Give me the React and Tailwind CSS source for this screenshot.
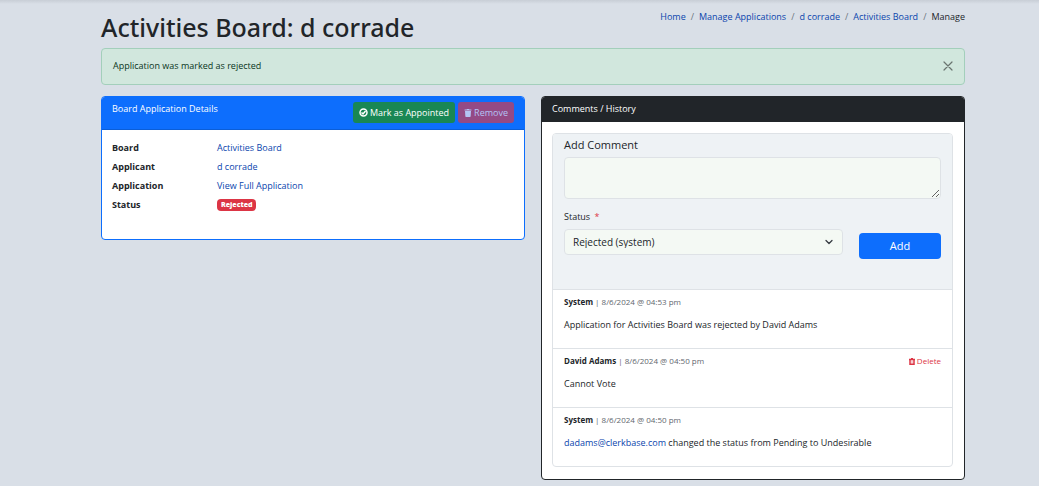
import { FaTrash } from "react-icons/fa";

const crumbs = ["Home", "Manage Applications", "d corrade", "Activities Board"];

function Row({ label, children }) {
  return (
    <div className="flex h-[19px] items-center">
      <dt className="w-[105px] shrink-0 font-bold">{label}</dt>
      <dd className="flex items-center">{children}</dd>
    </div>
  );
}

function Entry({ author, date, action, children }) {
  return (
    <li className="h-[59px] border-t border-[#dee2e6] px-[11px] pt-1.5">
      <div className="flex h-3 items-center justify-between text-[8px]">
        <div className="text-[#5f676e]">
          <strong className="font-bold text-[#212529]">{author}</strong> | {date}
        </div>
        {action}
      </div>
      <p className="mt-[11px] leading-3">{children}</p>
    </li>
  );
}

function Link({ children }) {
  return (
    <a href="#" className="text-[#0a45ad]">
      {children}
    </a>
  );
}

export default function App() {
  return (
    <div className="min-h-screen bg-[#d9dfe7] font-['Open_Sans','Noto_Sans',sans-serif] text-[9px] leading-3 text-[#212529]">
      <div className="h-1 bg-linear-to-b from-[#c8ced6] to-[#d9dfe7]" />
      <main className="pr-[74px] pb-1.5 pl-[101px]">
        <header className="flex h-11 items-start justify-between">
          <h1 className="pt-[5px] font-['Noto_Sans',sans-serif] text-[25px] leading-9 font-medium">Activities Board: d corrade</h1>
          <nav aria-label="Breadcrumb" className="pt-[7px]">
            <ol className="flex">
              {crumbs.map((c) => (
                <li key={c}>
                  <Link>{c}</Link>
                  <span className="px-[5px] text-[#6c757d]">/</span>
                </li>
              ))}
              <li aria-current="page">Manage</li>
            </ol>
          </nav>
        </header>

        <div role="alert" className="flex h-[37px] items-center justify-between rounded border border-[#a3cfbb] bg-[#d1e7dd] px-[11px] pb-px text-[#0a3622]">
          <span>Application was marked as rejected</span>
          <button type="button" aria-label="Close" className="text-[#69746f]">
            <svg width="10" height="10" viewBox="0 0 10 10" stroke="currentColor" strokeWidth="1.2" strokeLinecap="round">
              <path d="M1 1l8 8M9 1l-8 8" />
            </svg>
          </button>
        </div>

        <div className="mt-[11px] grid grid-cols-2 items-start gap-4">
          <section className="overflow-hidden rounded border border-[#0d6efd] bg-white">
            <div className="flex h-[33px] items-start justify-between border-b border-[#0b5ed7] bg-[#0d6efd] px-[10px] text-white">
              <h2 className="pt-1.5 font-medium">Board Application Details</h2>
              <div className="flex gap-[3px] pt-[5px]">
                <button type="button" className="flex h-[21px] items-center gap-0.5 rounded-[3px] bg-[#198754] px-1.5 font-medium">
                  <svg width="9" height="9" viewBox="0 0 18 18" fill="none" stroke="currentColor" strokeWidth="3">
                    <circle cx="9" cy="9" r="7" />
                    <path d="m5 9 3 3 5-6" />
                  </svg>
                  Mark as Appointed
                </button>
                <button type="button" disabled className="flex h-[21px] items-center gap-0.5 rounded-[3px] bg-[#944a85] px-1.5 font-medium text-[#b3c4f5]">
                  <FaTrash size={8} /> Remove
                </button>
              </div>
            </div>
            <dl className="h-[109px] px-[10px] pt-2">
              <Row label="Board"><Link>Activities Board</Link></Row>
              <Row label="Applicant"><Link>d corrade</Link></Row>
              <Row label="Application"><Link>View Full Application</Link></Row>
              <Row label="Status">
                <span className="rounded bg-[#dc3545] px-1 text-[7px] font-extrabold text-white">Rejected</span>
              </Row>
            </dl>
          </section>

          <section className="overflow-hidden rounded border border-[#212529] bg-white">
            <h2 className="h-[25px] bg-[#212529] px-[10px] pt-1.5 font-medium text-white">Comments / History</h2>
            <div className="pt-[11px] pr-[11px] pb-3 pl-[10px]">
              <div className="overflow-hidden rounded border border-[#dee2e6]">
                <form className="h-[155px] bg-[#eef2f5] px-[11px] pt-[3px]">
                  <label htmlFor="comment" className="block text-[11px] leading-4 font-medium">Add Comment</label>
                  <textarea id="comment" className="mt-1 block h-[42px] w-full resize-y rounded border border-[#dee2e6] bg-[#f4f9f4]" />
                  <div className="mt-3 flex items-end gap-4">
                    <div className="grow">
                      <label htmlFor="status" className="block">
                        Status <span className="pl-0.5 text-[#dc3545]">*</span>
                      </label>
                      <div className="mt-1.5 grid items-center">
                        <select id="status" className="col-start-1 row-start-1 h-[26px] w-full appearance-none rounded border border-[#dee2e6] bg-[#f4f9f4] px-2 text-[10px]">
                          <option>Rejected (system)</option>
                        </select>
                        <svg className="pointer-events-none col-start-1 row-start-1 mr-[10px] justify-self-end" width="8" height="8" viewBox="0 0 16 16" fill="none" stroke="#343a40" strokeWidth="2.5" strokeLinecap="round" strokeLinejoin="round">
                          <path d="m2 5 6 6 6-6" />
                        </svg>
                      </div>
                    </div>
                    <button type="button" className="-mb-1 h-[26px] w-[82px] rounded bg-[#0d6efd] text-[11px] text-white">Add</button>
                  </div>
                </form>
                <ul>
                  <Entry author="System" date="8/6/2024 @ 04:53 pm">
                    Application for Activities Board was rejected by David Adams
                  </Entry>
                  <Entry
                    author="David Adams"
                    date="8/6/2024 @ 04:50 pm"
                    action={
                      <button type="button" className="flex items-center gap-0.5 text-[#dc3545]">
                        <svg width="6" height="7" viewBox="0 0 12 14" fill="none" stroke="currentColor">
                          <path d="M0 3h12" strokeWidth="3" />
                          <path d="M4 1h4" strokeWidth="2" />
                          <path d="M2 3v9.5h8V3" strokeWidth="3" />
                          <path d="M6 5v6" strokeWidth="1" />
                        </svg>
                        Delete
                      </button>
                    }
                  >
                    Cannot Vote
                  </Entry>
                  <Entry author="System" date="8/6/2024 @ 04:50 pm">
                    <Link>dadams@clerkbase.com</Link> changed the status from Pending to Undesirable
                  </Entry>
                </ul>
              </div>
            </div>
          </section>
        </div>
      </main>
    </div>
  );
}
